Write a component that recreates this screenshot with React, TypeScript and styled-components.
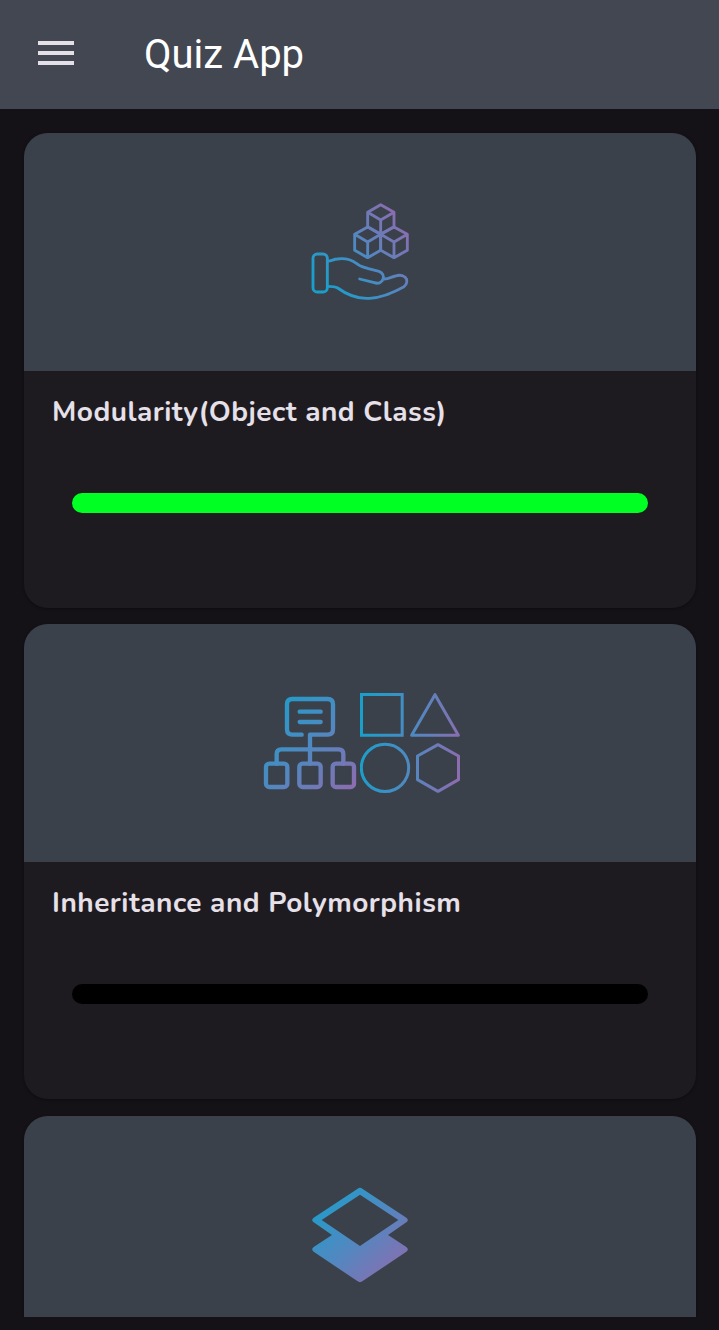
import React from "react";
import styled, { createGlobalStyle } from "styled-components";

const GlobalStyle = createGlobalStyle`
  *, *::before, *::after { box-sizing: border-box; }
  body { margin: 0; background: #141117; }
`;

const Screen = styled.div`
  display: flex;
  flex-direction: column;
  height: 1330px;
  padding-bottom: 13px;
  background: #141117;
  overflow: hidden;
`;

const AppBar = styled.header`
  display: flex;
  align-items: center;
  flex: none;
  height: 109px;
  padding: 0 38px;
  background: #424751;
`;

const MenuButton = styled.button`
  display: flex;
  flex-direction: column;
  gap: 6px;
  width: 36px;
  margin: 0 70px 3px 0;
  padding: 0;
  border: 0;
  background: none;
`;

const MenuLine = styled.span`
  height: 4px;
  background: #e5e0e8;
`;

const Title = styled.h1`
  margin: 0;
  font: 400 40px/48px Roboto, sans-serif;
  color: #fff;
`;

const List = styled.main`
  display: flex;
  flex-direction: column;
  flex: 1;
  min-height: 0;
  gap: 16.4px;
  padding: 24px 23px 0 24px;
  overflow: hidden;
`;

const Card = styled.article`
  flex: none;
  height: 475px;
  border-radius: 24px;
  background: #1e1b20;
  overflow: hidden;
  box-shadow: 0 1px 3px rgba(0, 0, 0, 0.3);
`;

const Media = styled.div`
  display: flex;
  align-items: center;
  justify-content: center;
  height: 237.5px;
  background: #3b414a;
`;

const Picture = styled.svg`
  display: block;
  flex: none;
  width: 100px;
  height: 100px;
  fill: none;
  stroke-linejoin: round;
  stroke-linecap: round;
`;

const CardBody = styled.div`
  padding: 24px 48px 0;
`;

const CardTitle = styled.h2`
  margin: 0 -20px 64px;
  font: 700 28px/34px Nunito, Lato, sans-serif;
  letter-spacing: 0.5px;
  white-space: nowrap;
  color: #e6e0e9;
`;

const Track = styled.div`
  height: 20px;
  border-radius: 10px;
  background: #000;
  overflow: hidden;
`;

const Fill = styled.div`
  height: 100%;
  background: #00ff22;
`;

type GradientProps = { id: string; x1: number; y1: number; x2: number; y2: number };

const Gradient = ({ id, ...line }: GradientProps) => (
  <defs>
    <linearGradient id={id} gradientUnits="userSpaceOnUse" {...line}>
      <stop offset="0" stopColor="#1a9fcb" />
      <stop offset="0.5" stopColor="#4e89c1" />
      <stop offset="1" stopColor="#8b6db0" />
    </linearGradient>
  </defs>
);

const HandIcon = () => (
  <Picture viewBox="30 36 300 300" stroke="url(#hand)" strokeWidth="8.5">
    <Gradient id="hand" x1={60} y1={280} x2={305} y2={90} />
    <rect x="39" y="192" width="43" height="114" rx="13" />
    <path d="M83 213C95 213 99 208 112 207C139 203 155 210 169 220C179 230 190 231 205 236L237 244C247 247 253 258 249 268C245 279 234 282 223 278L179 267" />
    <path d="M253 267C267 267 275 260 287 258C300 253 315 256 320 268C323 281 316 289 303 295C273 309 246 323 209 325C170 328 142 315 113 294C104 289 96 289 84 289" />
    <path d="M242 44L282 67V110L242 133L203 110V67Z M203 67L242 90L282 67 M242 90V133" />
    <path d="M203 111L242 133V181L203 203L164 181V133Z M164 133L203 156L242 133 M203 156V203" />
    <path d="M282 111L322 133V181L282 203L242 181V133Z M242 133L282 156L322 133 M282 156V203" />
  </Picture>
);

const TreeIcon = () => (
  <Picture viewBox="15 39 300 300" stroke="url(#tree)" strokeWidth="13">
    <Gradient id="tree" x1={40} y1={50} x2={300} y2={320} />
    <path d="M140 164H112Q96 164 96 148V73Q96 57 112 57H218Q234 57 234 73V148Q234 164 218 164H165V251" />
    <path d="M134 95H197M134 126H197" />
    <path d="M65 251V222Q65 208 79 208H251Q265 208 265 222V251" />
    <rect x="33" y="251" width="64" height="70" rx="10" />
    <rect x="133" y="251" width="64" height="70" rx="10" />
    <rect x="233" y="251" width="64" height="70" rx="10" />
  </Picture>
);

const ShapesIcon = () => (
  <Picture viewBox="30 39 300 300" stroke="url(#shapes)" strokeWidth="9">
    <Gradient id="shapes" x1={35} y1={180} x2={330} y2={215} />
    <path d="M34.500 43.500H156.500V165.500H34.500Z" strokeLinejoin="miter" />
    <path d="M255 44L325 165.500H185Z" />
    <circle cx="105" cy="263.500" r="71" />
    <path d="M264 194L325.500 228V299L264 334L202.500 299V228Z" />
  </Picture>
);

const LayersIcon = () => (
  <Picture viewBox="30 30 300 300">
    <Gradient id="layers" x1={50} y1={50} x2={295} y2={300} />
    <path
      fill="url(#layers)"
      fillRule="evenodd"
      d="M173 41Q180 36 187 41L319 128Q328 135 319 142L264 180L319 216Q328 223 319 230L187 319Q180 324 173 319L41 230Q32 223 41 216L96 180L41 142Q32 135 41 128ZM180 59L65 135L180 213L295 135Z"
    />
  </Picture>
);

type Topic = { title?: string; progress?: number; icons: React.FC[] };

const topics: Topic[] = [
  { title: "Modularity(Object and Class)", progress: 100, icons: [HandIcon] },
  { title: "Inheritance and Polymorphism", progress: 0, icons: [TreeIcon, ShapesIcon] },
  { icons: [LayersIcon] },
];

export default function App() {
  return (
    <>
      <GlobalStyle />
      <Screen>
        <AppBar>
          <MenuButton aria-label="Menu">
            <MenuLine />
            <MenuLine />
            <MenuLine />
          </MenuButton>
          <Title>Quiz App</Title>
        </AppBar>
        <List>
          {topics.map(({ title, progress, icons }, index) => (
            <Card key={index}>
              <Media>
                {icons.map((Icon, i) => (
                  <Icon key={i} />
                ))}
              </Media>
              {title && (
                <CardBody>
                  <CardTitle>{title}</CardTitle>
                  <Track>
                    <Fill style={{ width: `${progress}%` }} />
                  </Track>
                </CardBody>
              )}
            </Card>
          ))}
        </List>
      </Screen>
    </>
  );
}
